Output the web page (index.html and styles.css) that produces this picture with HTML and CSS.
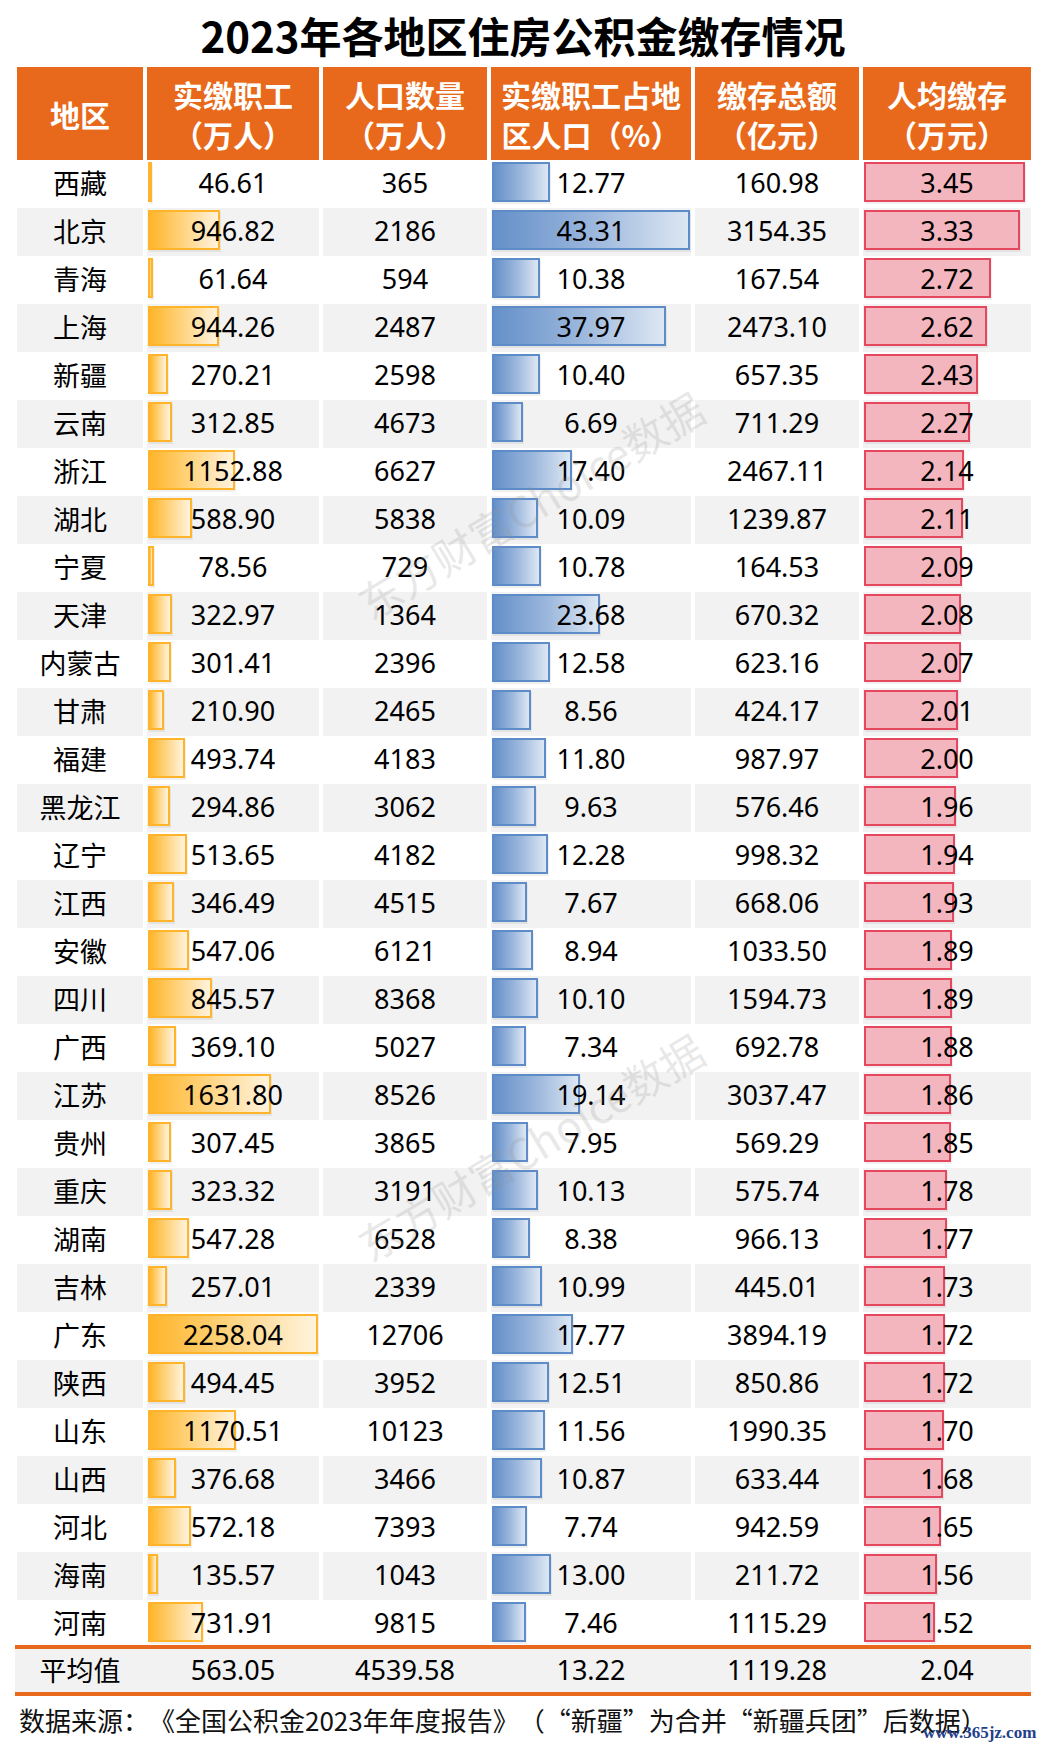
FILE: index.html
```html
<!DOCTYPE html>
<html lang="zh-CN">
<head>
<meta charset="utf-8">
<title>2023年各地区住房公积金缴存情况</title>
<link rel="stylesheet" href="styles.css">
</head>
<body>
<div class="page">
  <h1 class="title">2023年各地区住房公积金缴存情况</h1>
  <div class="table">
    <div class="head">
      <div class="h"><span>地区</span></div>
      <div class="h"><span>实缴职工</span><span>（万人）</span></div>
      <div class="h"><span>人口数量</span><span>（万人）</span></div>
      <div class="h"><span>实缴职工占地</span><span>区人口（%）</span></div>
      <div class="h"><span>缴存总额</span><span>（亿元）</span></div>
      <div class="h"><span>人均缴存</span><span>（万元）</span></div>
    </div>

    <div class="row">
      <div class="c"><span class="v">西藏</span></div>
      <div class="c"><span class="bar bar-o" style="width:3.5px"></span><span class="v">46.61</span></div>
      <div class="c"><span class="v">365</span></div>
      <div class="c"><span class="bar bar-b" style="width:58.4px"></span><span class="v">12.77</span></div>
      <div class="c"><span class="v">160.98</span></div>
      <div class="c"><span class="bar bar-p" style="width:161.4px"></span><span class="v">3.45</span></div>
    </div>
    <div class="row alt">
      <div class="c"><span class="v">北京</span></div>
      <div class="c"><span class="bar bar-o" style="width:71.5px"></span><span class="v">946.82</span></div>
      <div class="c"><span class="v">2186</span></div>
      <div class="c"><span class="bar bar-b" style="width:198px"></span><span class="v">43.31</span></div>
      <div class="c"><span class="v">3154.35</span></div>
      <div class="c"><span class="bar bar-p" style="width:155.8px"></span><span class="v">3.33</span></div>
    </div>
    <div class="row">
      <div class="c"><span class="v">青海</span></div>
      <div class="c"><span class="bar bar-o" style="width:4.7px"></span><span class="v">61.64</span></div>
      <div class="c"><span class="v">594</span></div>
      <div class="c"><span class="bar bar-b" style="width:47.5px"></span><span class="v">10.38</span></div>
      <div class="c"><span class="v">167.54</span></div>
      <div class="c"><span class="bar bar-p" style="width:127.3px"></span><span class="v">2.72</span></div>
    </div>
    <div class="row alt">
      <div class="c"><span class="v">上海</span></div>
      <div class="c"><span class="bar bar-o" style="width:71.3px"></span><span class="v">944.26</span></div>
      <div class="c"><span class="v">2487</span></div>
      <div class="c"><span class="bar bar-b" style="width:173.6px"></span><span class="v">37.97</span></div>
      <div class="c"><span class="v">2473.10</span></div>
      <div class="c"><span class="bar bar-p" style="width:122.6px"></span><span class="v">2.62</span></div>
    </div>
    <div class="row">
      <div class="c"><span class="v">新疆</span></div>
      <div class="c"><span class="bar bar-o" style="width:20.4px"></span><span class="v">270.21</span></div>
      <div class="c"><span class="v">2598</span></div>
      <div class="c"><span class="bar bar-b" style="width:47.6px"></span><span class="v">10.40</span></div>
      <div class="c"><span class="v">657.35</span></div>
      <div class="c"><span class="bar bar-p" style="width:113.7px"></span><span class="v">2.43</span></div>
    </div>
    <div class="row alt">
      <div class="c"><span class="v">云南</span></div>
      <div class="c"><span class="bar bar-o" style="width:23.6px"></span><span class="v">312.85</span></div>
      <div class="c"><span class="v">4673</span></div>
      <div class="c"><span class="bar bar-b" style="width:30.6px"></span><span class="v">6.69</span></div>
      <div class="c"><span class="v">711.29</span></div>
      <div class="c"><span class="bar bar-p" style="width:106.2px"></span><span class="v">2.27</span></div>
    </div>
    <div class="row">
      <div class="c"><span class="v">浙江</span></div>
      <div class="c"><span class="bar bar-o" style="width:87px"></span><span class="v">1152.88</span></div>
      <div class="c"><span class="v">6627</span></div>
      <div class="c"><span class="bar bar-b" style="width:79.6px"></span><span class="v">17.40</span></div>
      <div class="c"><span class="v">2467.11</span></div>
      <div class="c"><span class="bar bar-p" style="width:100.1px"></span><span class="v">2.14</span></div>
    </div>
    <div class="row alt">
      <div class="c"><span class="v">湖北</span></div>
      <div class="c"><span class="bar bar-o" style="width:44.4px"></span><span class="v">588.90</span></div>
      <div class="c"><span class="v">5838</span></div>
      <div class="c"><span class="bar bar-b" style="width:46.1px"></span><span class="v">10.09</span></div>
      <div class="c"><span class="v">1239.87</span></div>
      <div class="c"><span class="bar bar-p" style="width:98.7px"></span><span class="v">2.11</span></div>
    </div>
    <div class="row">
      <div class="c"><span class="v">宁夏</span></div>
      <div class="c"><span class="bar bar-o" style="width:5.9px"></span><span class="v">78.56</span></div>
      <div class="c"><span class="v">729</span></div>
      <div class="c"><span class="bar bar-b" style="width:49.3px"></span><span class="v">10.78</span></div>
      <div class="c"><span class="v">164.53</span></div>
      <div class="c"><span class="bar bar-p" style="width:97.8px"></span><span class="v">2.09</span></div>
    </div>
    <div class="row alt">
      <div class="c"><span class="v">天津</span></div>
      <div class="c"><span class="bar bar-o" style="width:24.4px"></span><span class="v">322.97</span></div>
      <div class="c"><span class="v">1364</span></div>
      <div class="c"><span class="bar bar-b" style="width:108.3px"></span><span class="v">23.68</span></div>
      <div class="c"><span class="v">670.32</span></div>
      <div class="c"><span class="bar bar-p" style="width:97.3px"></span><span class="v">2.08</span></div>
    </div>
    <div class="row">
      <div class="c"><span class="v">内蒙古</span></div>
      <div class="c"><span class="bar bar-o" style="width:22.7px"></span><span class="v">301.41</span></div>
      <div class="c"><span class="v">2396</span></div>
      <div class="c"><span class="bar bar-b" style="width:57.5px"></span><span class="v">12.58</span></div>
      <div class="c"><span class="v">623.16</span></div>
      <div class="c"><span class="bar bar-p" style="width:96.8px"></span><span class="v">2.07</span></div>
    </div>
    <div class="row alt">
      <div class="c"><span class="v">甘肃</span></div>
      <div class="c"><span class="bar bar-o" style="width:15.9px"></span><span class="v">210.90</span></div>
      <div class="c"><span class="v">2465</span></div>
      <div class="c"><span class="bar bar-b" style="width:39.1px"></span><span class="v">8.56</span></div>
      <div class="c"><span class="v">424.17</span></div>
      <div class="c"><span class="bar bar-p" style="width:94px"></span><span class="v">2.01</span></div>
    </div>
    <div class="row">
      <div class="c"><span class="v">福建</span></div>
      <div class="c"><span class="bar bar-o" style="width:37.3px"></span><span class="v">493.74</span></div>
      <div class="c"><span class="v">4183</span></div>
      <div class="c"><span class="bar bar-b" style="width:54px"></span><span class="v">11.80</span></div>
      <div class="c"><span class="v">987.97</span></div>
      <div class="c"><span class="bar bar-p" style="width:93.6px"></span><span class="v">2.00</span></div>
    </div>
    <div class="row alt">
      <div class="c"><span class="v">黑龙江</span></div>
      <div class="c"><span class="bar bar-o" style="width:22.3px"></span><span class="v">294.86</span></div>
      <div class="c"><span class="v">3062</span></div>
      <div class="c"><span class="bar bar-b" style="width:44px"></span><span class="v">9.63</span></div>
      <div class="c"><span class="v">576.46</span></div>
      <div class="c"><span class="bar bar-p" style="width:91.7px"></span><span class="v">1.96</span></div>
    </div>
    <div class="row">
      <div class="c"><span class="v">辽宁</span></div>
      <div class="c"><span class="bar bar-o" style="width:38.8px"></span><span class="v">513.65</span></div>
      <div class="c"><span class="v">4182</span></div>
      <div class="c"><span class="bar bar-b" style="width:56.1px"></span><span class="v">12.28</span></div>
      <div class="c"><span class="v">998.32</span></div>
      <div class="c"><span class="bar bar-p" style="width:90.8px"></span><span class="v">1.94</span></div>
    </div>
    <div class="row alt">
      <div class="c"><span class="v">江西</span></div>
      <div class="c"><span class="bar bar-o" style="width:26.1px"></span><span class="v">346.49</span></div>
      <div class="c"><span class="v">4515</span></div>
      <div class="c"><span class="bar bar-b" style="width:35.1px"></span><span class="v">7.67</span></div>
      <div class="c"><span class="v">668.06</span></div>
      <div class="c"><span class="bar bar-p" style="width:90.3px"></span><span class="v">1.93</span></div>
    </div>
    <div class="row">
      <div class="c"><span class="v">安徽</span></div>
      <div class="c"><span class="bar bar-o" style="width:41.3px"></span><span class="v">547.06</span></div>
      <div class="c"><span class="v">6121</span></div>
      <div class="c"><span class="bar bar-b" style="width:40.9px"></span><span class="v">8.94</span></div>
      <div class="c"><span class="v">1033.50</span></div>
      <div class="c"><span class="bar bar-p" style="width:88.4px"></span><span class="v">1.89</span></div>
    </div>
    <div class="row alt">
      <div class="c"><span class="v">四川</span></div>
      <div class="c"><span class="bar bar-o" style="width:63.8px"></span><span class="v">845.57</span></div>
      <div class="c"><span class="v">8368</span></div>
      <div class="c"><span class="bar bar-b" style="width:46.2px"></span><span class="v">10.10</span></div>
      <div class="c"><span class="v">1594.73</span></div>
      <div class="c"><span class="bar bar-p" style="width:88.4px"></span><span class="v">1.89</span></div>
    </div>
    <div class="row">
      <div class="c"><span class="v">广西</span></div>
      <div class="c"><span class="bar bar-o" style="width:27.9px"></span><span class="v">369.10</span></div>
      <div class="c"><span class="v">5027</span></div>
      <div class="c"><span class="bar bar-b" style="width:33.6px"></span><span class="v">7.34</span></div>
      <div class="c"><span class="v">692.78</span></div>
      <div class="c"><span class="bar bar-p" style="width:88px"></span><span class="v">1.88</span></div>
    </div>
    <div class="row alt">
      <div class="c"><span class="v">江苏</span></div>
      <div class="c"><span class="bar bar-o" style="width:123.1px"></span><span class="v">1631.80</span></div>
      <div class="c"><span class="v">8526</span></div>
      <div class="c"><span class="bar bar-b" style="width:87.5px"></span><span class="v">19.14</span></div>
      <div class="c"><span class="v">3037.47</span></div>
      <div class="c"><span class="bar bar-p" style="width:87px"></span><span class="v">1.86</span></div>
    </div>
    <div class="row">
      <div class="c"><span class="v">贵州</span></div>
      <div class="c"><span class="bar bar-o" style="width:23.2px"></span><span class="v">307.45</span></div>
      <div class="c"><span class="v">3865</span></div>
      <div class="c"><span class="bar bar-b" style="width:36.3px"></span><span class="v">7.95</span></div>
      <div class="c"><span class="v">569.29</span></div>
      <div class="c"><span class="bar bar-p" style="width:86.6px"></span><span class="v">1.85</span></div>
    </div>
    <div class="row alt">
      <div class="c"><span class="v">重庆</span></div>
      <div class="c"><span class="bar bar-o" style="width:24.4px"></span><span class="v">323.32</span></div>
      <div class="c"><span class="v">3191</span></div>
      <div class="c"><span class="bar bar-b" style="width:46.3px"></span><span class="v">10.13</span></div>
      <div class="c"><span class="v">575.74</span></div>
      <div class="c"><span class="bar bar-p" style="width:83.3px"></span><span class="v">1.78</span></div>
    </div>
    <div class="row">
      <div class="c"><span class="v">湖南</span></div>
      <div class="c"><span class="bar bar-o" style="width:41.3px"></span><span class="v">547.28</span></div>
      <div class="c"><span class="v">6528</span></div>
      <div class="c"><span class="bar bar-b" style="width:38.3px"></span><span class="v">8.38</span></div>
      <div class="c"><span class="v">966.13</span></div>
      <div class="c"><span class="bar bar-p" style="width:82.8px"></span><span class="v">1.77</span></div>
    </div>
    <div class="row alt">
      <div class="c"><span class="v">吉林</span></div>
      <div class="c"><span class="bar bar-o" style="width:19.4px"></span><span class="v">257.01</span></div>
      <div class="c"><span class="v">2339</span></div>
      <div class="c"><span class="bar bar-b" style="width:50.2px"></span><span class="v">10.99</span></div>
      <div class="c"><span class="v">445.01</span></div>
      <div class="c"><span class="bar bar-p" style="width:80.9px"></span><span class="v">1.73</span></div>
    </div>
    <div class="row">
      <div class="c"><span class="v">广东</span></div>
      <div class="c"><span class="bar bar-o" style="width:170.4px"></span><span class="v">2258.04</span></div>
      <div class="c"><span class="v">12706</span></div>
      <div class="c"><span class="bar bar-b" style="width:81.2px"></span><span class="v">17.77</span></div>
      <div class="c"><span class="v">3894.19</span></div>
      <div class="c"><span class="bar bar-p" style="width:80.5px"></span><span class="v">1.72</span></div>
    </div>
    <div class="row alt">
      <div class="c"><span class="v">陕西</span></div>
      <div class="c"><span class="bar bar-o" style="width:37.3px"></span><span class="v">494.45</span></div>
      <div class="c"><span class="v">3952</span></div>
      <div class="c"><span class="bar bar-b" style="width:57.2px"></span><span class="v">12.51</span></div>
      <div class="c"><span class="v">850.86</span></div>
      <div class="c"><span class="bar bar-p" style="width:80.5px"></span><span class="v">1.72</span></div>
    </div>
    <div class="row">
      <div class="c"><span class="v">山东</span></div>
      <div class="c"><span class="bar bar-o" style="width:88.3px"></span><span class="v">1170.51</span></div>
      <div class="c"><span class="v">10123</span></div>
      <div class="c"><span class="bar bar-b" style="width:52.9px"></span><span class="v">11.56</span></div>
      <div class="c"><span class="v">1990.35</span></div>
      <div class="c"><span class="bar bar-p" style="width:79.5px"></span><span class="v">1.70</span></div>
    </div>
    <div class="row alt">
      <div class="c"><span class="v">山西</span></div>
      <div class="c"><span class="bar bar-o" style="width:28.4px"></span><span class="v">376.68</span></div>
      <div class="c"><span class="v">3466</span></div>
      <div class="c"><span class="bar bar-b" style="width:49.7px"></span><span class="v">10.87</span></div>
      <div class="c"><span class="v">633.44</span></div>
      <div class="c"><span class="bar bar-p" style="width:78.6px"></span><span class="v">1.68</span></div>
    </div>
    <div class="row">
      <div class="c"><span class="v">河北</span></div>
      <div class="c"><span class="bar bar-o" style="width:43.2px"></span><span class="v">572.18</span></div>
      <div class="c"><span class="v">7393</span></div>
      <div class="c"><span class="bar bar-b" style="width:35.4px"></span><span class="v">7.74</span></div>
      <div class="c"><span class="v">942.59</span></div>
      <div class="c"><span class="bar bar-p" style="width:77.2px"></span><span class="v">1.65</span></div>
    </div>
    <div class="row alt">
      <div class="c"><span class="v">海南</span></div>
      <div class="c"><span class="bar bar-o" style="width:10.2px"></span><span class="v">135.57</span></div>
      <div class="c"><span class="v">1043</span></div>
      <div class="c"><span class="bar bar-b" style="width:59.4px"></span><span class="v">13.00</span></div>
      <div class="c"><span class="v">211.72</span></div>
      <div class="c"><span class="bar bar-p" style="width:73px"></span><span class="v">1.56</span></div>
    </div>
    <div class="row">
      <div class="c"><span class="v">河南</span></div>
      <div class="c"><span class="bar bar-o" style="width:55.2px"></span><span class="v">731.91</span></div>
      <div class="c"><span class="v">9815</span></div>
      <div class="c"><span class="bar bar-b" style="width:34.1px"></span><span class="v">7.46</span></div>
      <div class="c"><span class="v">1115.29</span></div>
      <div class="c"><span class="bar bar-p" style="width:71.1px"></span><span class="v">1.52</span></div>
    </div>

    <div class="avg">
      <div class="c"><span class="v">平均值</span></div>
      <div class="c"><span class="v">563.05</span></div>
      <div class="c"><span class="v">4539.58</span></div>
      <div class="c"><span class="v">13.22</span></div>
      <div class="c"><span class="v">1119.28</span></div>
      <div class="c"><span class="v">2.04</span></div>
    </div>
  </div>
  <p class="source">数据来源：《全国公积金2023年年度报告》（“新疆”为合并“新疆兵团”后数据）</p>
  <div class="wm wm1">东方财富Choice数据</div>
  <div class="wm wm2">东方财富Choice数据</div>
  <div class="site">www.365jz.com</div>
</div>
</body>
</html>
```

FILE: styles.css
```css
html, body {
  margin: 0;
  padding: 0;
  background: #ffffff;
}

.page {
  position: relative;
  width: 1046px;
  height: 1749px;
  overflow: hidden;
  text-spacing-trim: space-all;
}

.title {
  margin: 0;
  height: 67px;
  display: flex;
  align-items: center;
  justify-content: center;
  font-family: "Noto Sans CJK SC", sans-serif;
  font-weight: 700;
  font-size: 42px;
  color: #000;
  padding-top: 1px;
  box-sizing: border-box;
}

.table {
  margin-left: 15px;
  width: 1016px;
}

.head,
.row,
.avg {
  display: grid;
  grid-template-columns: 126px 172px 164px 200px 164px 168px;
  column-gap: 4px;
  padding-left: 2px;
}

.head {
  height: 93px;
}

.h {
  background: #e8691b;
  color: #ffffff;
  font-family: "Noto Sans CJK SC", sans-serif;
  font-weight: 700;
  font-size: 30px;
  line-height: 40px;
  display: flex;
  flex-direction: column;
  align-items: center;
  justify-content: center;
  padding-top: 0;
  box-sizing: border-box;
  white-space: nowrap;
  text-spacing-trim: space-all;
}

.row {
  height: 48px;
}

.c {
  display: grid;
  align-items: center;
  font-family: "Noto Sans", "Noto Sans CJK SC", sans-serif;
  font-size: 27px;
  color: #000;
  min-width: 0;
}

.c > * {
  grid-area: 1 / 1;
}

.row.alt .c {
  background: #f2f2f2;
}

.v {
  justify-self: center;
  margin-bottom: 4px;
  white-space: nowrap;
}

.bar {
  align-self: start;
  justify-self: start;
  margin-top: 2px;
  margin-left: 1px;
  height: 40px;
  box-sizing: border-box;
  border: 2px solid;
  box-shadow: 1px 2px 0 rgba(0, 0, 0, 0.06);
}

.bar-o {
  border-color: #ffb429;
  background: linear-gradient(to right, #ffb52a 0%, #ffd27a 45%, #fff3de 100%);
}

.bar-b {
  border-color: #5d8cc9;
  background: linear-gradient(to right, #6590c9 0%, #9ab6dc 50%, #dde7f3 100%);
}

.bar-p {
  border-color: #e5485e;
  background: #f4b6be;
}

.avg {
  background: #f2f2f2;
  border-top: 4px solid #e8691b;
  border-bottom: 4px solid #e8691b;
  height: 43px;
  margin-top: -3px;
}

.avg .v {
  margin-bottom: 2px;
}

.source {
  margin: 8px 0 0 19px;
  font-family: "Noto Sans CJK SC", sans-serif;
  font-size: 26px;
  line-height: 32px;
  color: #111;
  white-space: nowrap;
  text-spacing-trim: space-all;
}

.wm {
  position: absolute;
  font-family: "Noto Sans CJK SC", sans-serif;
  font-size: 43px;
  color: rgba(150, 150, 150, 0.22);
  white-space: nowrap;
  transform: translate(-50%, -50%) rotate(-31deg);
  pointer-events: none;
}

.wm1 {
  left: 530px;
  top: 504px;
}

.wm2 {
  left: 530px;
  top: 1146px;
}

.site {
  position: absolute;
  left: 923px;
  top: 1723px;
  font-family: "Liberation Serif", serif;
  font-weight: 700;
  font-size: 17px;
  color: #23408c;
  white-space: nowrap;
}
```
